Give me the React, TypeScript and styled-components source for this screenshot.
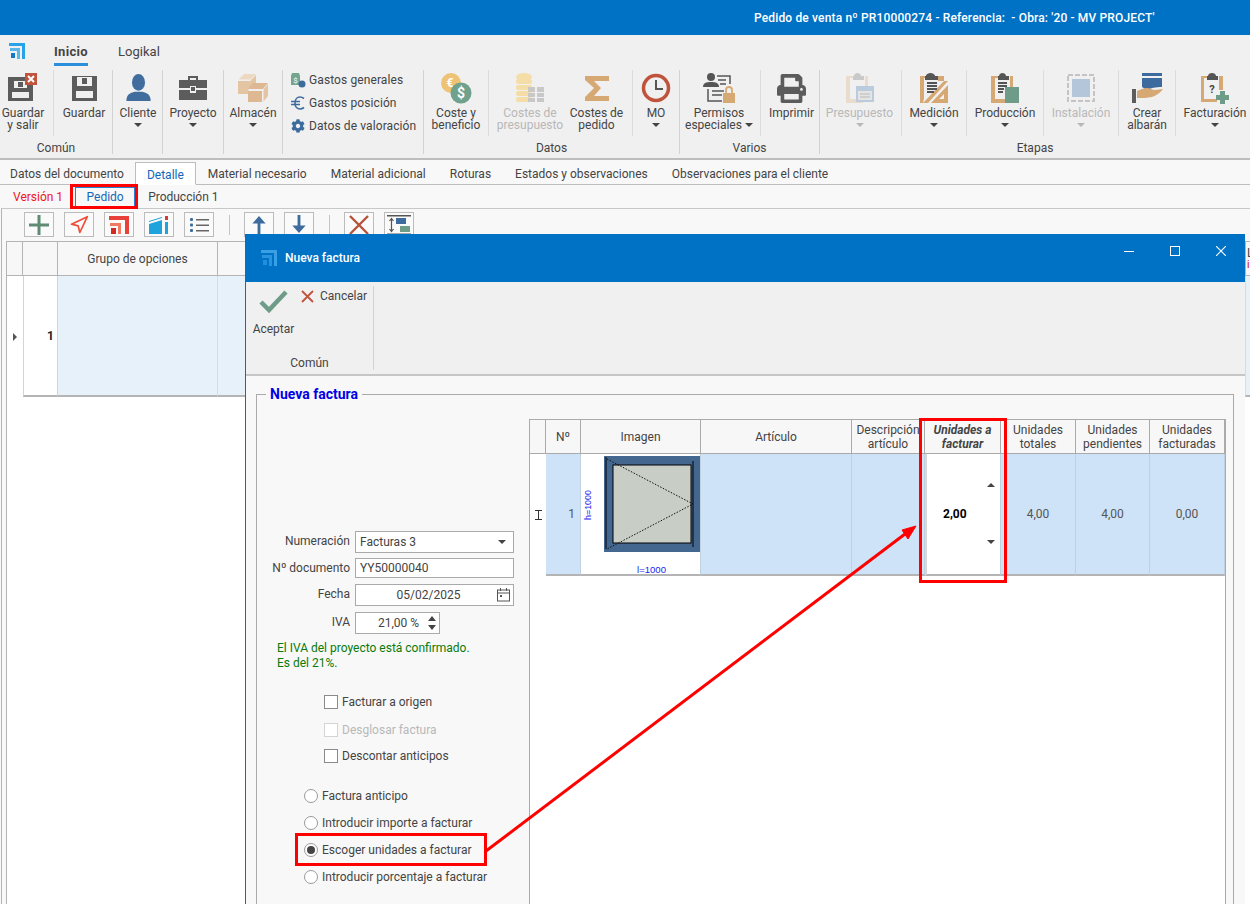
import React from "react";
import styled, { createGlobalStyle } from "styled-components";
import { Navigation } from "lucide-react";
import { FaCog, FaPrint } from "react-icons/fa";

const Global = createGlobalStyle`
  html, body { margin: 0; padding: 0; background: #f8f8f8; }
  * { box-sizing: border-box; }
  body { font-family: Roboto, "Liberation Sans", sans-serif; font-size: 12px; color: #444; }
`;

const Page = styled.div`
  position: relative; width: 1250px; height: 904px; overflow: hidden; background: #f8f8f8;
`;
const TopBar = styled.div`
  height: 35px; background: #0072c6; color: #fff; font-weight: 500; font-size: 12px; letter-spacing: .15px;
  display: flex; align-items: center; padding-left: 754px; white-space: pre;
`;
const MenuRow = styled.div`
  height: 32px; background: #f0f0f0; display: flex; align-items: flex-start; padding-left: 9px;
`;
const LogoSlot = styled.div`
  width: 45px; height: 32px; padding-top: 8px; display: flex;
`;
const MenuTab = styled.div<{ $on?: boolean }>`
  height: 31px; margin-right: 30px; line-height: 33px; font-size: 13px;
  font-weight: ${p => (p.$on ? 700 : 400)};
  letter-spacing: ${p => (p.$on ? ".3px" : ".05px")};
  border-bottom: 3px solid ${p => (p.$on ? "#2a8fdc" : "transparent")};
`;
const Ribbon = styled.div`
  height: 93px; background: #f0f0f0; display: flex; padding: 3px 0 4px; border-bottom: 2px solid #bdbdbd;
`;
const Group = styled.div<{ $w: number; $end?: boolean }>`
  width: ${p => p.$w}px; height: 84px; display: flex; flex-direction: column; flex: none;
  border-right: ${p => (p.$end ? "none" : "1px solid #d2d2d2")};
`;
const GroupItems = styled.div`
  height: 66px; display: flex;
`;
const GroupLabel = styled.div`
  height: 18px; padding-top: 5px; line-height: 14px; text-align: center;
`;
const Tool = styled.div<{ $w: number; $sep?: boolean; $pl?: number; $pr?: number; $off?: boolean }>`
  width: ${p => p.$w}px; flex: none; height: 66px; padding: 2px ${p => p.$pr || 0}px 0 ${p => p.$pl || 0}px;
  display: flex; flex-direction: column; align-items: center;
  border-right: ${p => (p.$sep ? "1px solid #dcdcdc" : "none")};
  color: ${p => (p.$off ? "#b8b8b8" : "#444")};
`;
const ToolIcon = styled.div`
  height: 32px; display: flex; align-items: center; justify-content: center;
`;
const ToolLabel = styled.div`
  margin-top: 3px; line-height: 12px; text-align: center; white-space: nowrap;
`;
const Caret = styled.span<{ $off?: boolean }>`
  display: block; width: 0; height: 0; margin: 4px auto 0;
  border-left: 4px solid transparent; border-right: 4px solid transparent;
  border-top: 4px solid ${p => (p.$off ? "#b8b8b8" : "#444")};
`;
const InlineCaret = styled(Caret)`
  display: inline-block; margin: 0 0 2px 3px;
`;
const SelectCaret = styled(Caret)`
  margin: 0 3px 0 0;
`;
const SideList = styled.div`
  display: flex; flex-direction: column; padding: 0 0 0 7px; height: 66px; gap: 3px;
`;
const SideItem = styled.div`
  height: 20px; display: flex; align-items: center; gap: 3px; white-space: nowrap; letter-spacing: .1px;
`;
const SideIcon = styled.div`
  width: 16px; display: flex; justify-content: center; align-items: center;
`;
const DocTabs = styled.div`
  height: 23px; margin-top: 2px; background: #f8f8f8; display: flex; border-bottom: 1px solid #bdbdbd;
`;
const DocTab = styled.div<{ $on?: boolean; $first?: boolean }>`
  padding: 0 ${p => (p.$on ? 11 : p.$first ? 11 : 12)}px 0 ${p => (p.$first ? 10 : p.$on ? 11 : 12)}px; line-height: 24px; height: 23px;
  color: ${p => (p.$on ? "#1467b8" : "#444")};
  background: ${p => (p.$on ? "#fff" : "transparent")};
  border: ${p => (p.$on ? "1px solid #bdbdbd" : "none")};
  border-bottom: ${p => (p.$on ? "1px solid #fff" : "none")};
`;
const SubTabs = styled.div`
  height: 23px; display: flex; align-items: center; padding: 1px 0 0 13px;
`;
const SubTab = styled.div<{ $kind?: "red" | "on" }>`
  line-height: 18px;
  color: ${p => (p.$kind === "red" ? "#f0141e" : p.$kind === "on" ? "#1467b8" : "#444")};
  ${p => p.$kind === "on" ? "width: 60px; text-align: center; margin: 0 13px 0 12px; border: 1px solid #2a7fd0; height: 20px;" : ""}
`;
const Panel = styled.div`
  margin: 0 0 0 1px; border-top: 1px solid #c8c8c8; border-left: 1px solid #b4b4b4; height: 700px;
  padding: 3px 0 0 4px;
`;
const Toolbar = styled.div`
  height: 29px; display: flex; align-items: flex-start; padding-left: 18px; gap: 10px;
`;
const IconBtn = styled.div`
  width: 30px; height: 25px; border: 1px solid #bcbcbc; background: #fafafa;
  display: flex; align-items: center; justify-content: center;
`;
const ToolSep = styled.div`
  width: 1px; height: 20px; margin: 3px 4px 0 5px; background: #c4c4c4;
`;
const BackGrid = styled.div`
  display: grid; grid-template-columns: 16px 35px 160px 1028px 20px; grid-template-rows: 34px 121px; align-content: start;
  border-left: 1px solid #b4b4b4; border-top: 1px solid #b4b4b4; width: 1260px; height: 680px; background: #fff;
`;
const BackHead = styled.div`
  background: #f7f7f7; border-right: 1px solid #b4b4b4; border-bottom: 1px solid #b4b4b4;
  display: flex; align-items: center; justify-content: center; overflow: hidden;
`;
const BackEdge = styled(BackHead)`
  flex-direction: column; align-items: flex-start; padding-left: 1px; line-height: 12px; border-right: none;
`;
const RedMark = styled.span`
  color: #c00; font-size: 10px;
`;
const BackCell = styled.div<{ $kind?: "row" | "idx" | "ind" }>`
  background: ${p => (p.$kind === "row" ? "#e6f1fa" : "#fff")};
  border-right: ${p => (p.$kind === "ind" ? "none" : p.$kind === "row" ? "1px solid #d4dde4" : "1px solid #d4d4d4")};
  border-left: ${p => (p.$kind === "idx" ? "1px solid #d4d4d4" : "none")};
  border-bottom: ${p => (p.$kind === "ind" ? "none" : "2px solid #b4b4b4")};
  display: flex; align-items: center; justify-content: ${p => (p.$kind === "idx" ? "flex-end" : "center")};
  padding-right: ${p => (p.$kind === "idx" ? "3px" : 0)}; font-weight: ${p => (p.$kind === "idx" ? 700 : 400)};
  color: #222;
`;
const RowPointer = styled.span`
  width: 0; height: 0; border-top: 4px solid transparent; border-bottom: 4px solid transparent; border-left: 4px solid #555;
`;

/* Modal window */
const Modal = styled.div`
  position: absolute; left: 245px; top: 234px; width: 1000px; height: 690px; background: #f8f8f8;
  border-left: 1px solid #0072c6; display: flex; flex-direction: column;
`;
const TitleBar = styled.div`
  height: 48px; margin-left: -1px; background: #0072c6; color: #fff; display: flex; align-items: center;
  padding: 0 19px 0 16px; flex: none; font-weight: 500;
`;
const TitleText = styled.div`
  margin-left: 8px; flex: 1; padding-bottom: 1px;
`;
const WinControls = styled.div`
  display: flex; gap: 36px; align-items: center; padding-bottom: 14px;
`;
const ModalBar = styled.div`
  height: 94px; flex: none; background: #f0f0f0; border-bottom: 2px solid #c6c6c6; padding-top: 4px; display: flex;
`;
const ModalGroup = styled.div`
  width: 128px; height: 84px; border-right: 1px solid #d2d2d2; display: flex; flex-direction: column;
`;
const ModalActions = styled.div`
  height: 68px; display: flex;
`;
const AcceptTool = styled.div`
  width: 55px; display: flex; flex-direction: column; align-items: center; padding-top: 4px; gap: 8px;
`;
const CancelTool = styled.div`
  display: flex; gap: 6px; height: 20px; align-items: center;
`;
const ModalGroupLabel = styled.div`
  text-align: center; line-height: 14px; padding-top: 5px;
`;
const ModalBody = styled.div`
  flex: 1; padding: 10px 11px 0 10px; min-height: 0;
`;
const Frame = styled.fieldset`
  margin: 0; padding: 0; height: 600px; border: 1px solid #aaa; display: flex; min-width: 0;
`;
const FrameTitle = styled.legend`
  margin-left: 9px; padding: 0 4px; font-size: 14px; line-height: 16px; font-weight: 700; color: #0000e6;
`;
const FrameRow = styled.div`
  display: flex; height: 100%; width: 100%;
`;
const FormCol = styled.div`
  width: 272px; flex: none; padding-top: 129px; display: flex; flex-direction: column;
`;
const FieldRow = styled.div<{ $mb: number }>`
  display: flex; gap: 5px; margin-bottom: ${p => p.$mb}px; align-items: flex-start;
`;
const FieldLabel = styled.div`
  width: 93px; text-align: right; padding-top: 3px; line-height: 14px; white-space: nowrap;
`;
const InputBox = styled.div<{ $w?: number; $h: number; $center?: boolean }>`
  width: ${p => p.$w || 159}px; height: ${p => p.$h}px; border: 1px solid #aaa; background: #fff;
  display: flex; align-items: center; padding: 0 4px; position: relative;
  justify-content: ${p => (p.$center ? "center" : "space-between")};
  ${p => (p.$center ? "padding-right: 16px;" : "")}
`;
const InputEnd = styled.span`
  position: absolute; right: 3px; top: 50%; transform: translateY(-50%); display: flex;
`;
const SpinValue = styled.span`
  position: absolute; right: 20px;
`;
const Notice = styled.div`
  margin: 7px 0 0 20px; color: #0a7a0a; line-height: 15px; height: 47px;
`;
const CheckList = styled.div`
  padding-left: 67px; display: flex; flex-direction: column;
`;
const CheckRow = styled.div<{ $h: number; $off?: boolean }>`
  height: ${p => p.$h}px; display: flex; align-items: center; gap: 4px; color: ${p => (p.$off ? "#b8b8b8" : "#444")};
`;
const CheckBox = styled.span<{ $off?: boolean }>`
  width: 14px; height: 14px; border: 1px solid ${p => (p.$off ? "#d4d4d4" : "#8a8a8a")}; background: #fff; flex: none;
`;
const RadioList = styled.div`
  padding-left: 47px; margin-top: 14px; display: flex; flex-direction: column;
`;
const RadioRow = styled.div`
  height: 27px; display: flex; align-items: center; gap: 4px; white-space: nowrap;
`;
const Radio = styled.span<{ $on?: boolean }>`
  width: 14px; height: 14px; border-radius: 50%; border: 1px solid #9a9a9a; background: #fff; flex: none;
  display: flex; align-items: center; justify-content: center;
  &::after { content: ""; width: 8px; height: 8px; border-radius: 50%; background: ${p => (p.$on ? "#444" : "transparent")}; }
`;
const DataGrid = styled.div`
  margin-top: 17px; width: 697px; height: 100%; background: #fff; border-left: 1px solid #aaa; border-right: 1px solid #aaa;
  display: grid; grid-template-columns: 16px 35px 120px 151px 73px 76px 75px 74px 75px; grid-template-rows: 34px 122px; align-content: start;
  border-top: 1px solid #aaa;
`;
const Head = styled.div<{ $edit?: boolean }>`
  background: #f7f7f7; border-right: 1px solid #aaa; border-bottom: 1px solid #aaa; display: flex; align-items: center; justify-content: center;
  text-align: center; line-height: 14px; overflow: hidden;
  font-weight: ${p => (p.$edit ? 700 : 400)}; font-style: ${p => (p.$edit ? "italic" : "normal")};
`;
const Cell = styled.div<{ $num?: boolean }>`
  background: #cfe3f8; border-right: 1px solid #bfd0e0; border-bottom: 2px solid #b4b4b4; display: flex; align-items: center;
  justify-content: ${p => (p.$num ? "flex-end" : "center")}; padding-right: ${p => (p.$num ? "5px" : 0)}; color: #555;
`;
const IndCell = styled(Cell)`
  background: #fff; border-right: none; border-bottom: none;
`;
const ImageCell = styled(Cell)`
  background: #fff; align-items: flex-start;
`;
const EditCell = styled(Cell)`
  background: #fff; border-left: 2px solid #d8d8d8; justify-content: flex-start; padding-left: 16px; color: #000; font-weight: 700; position: relative;
`;
const SpinUp = styled.span`
  position: absolute; right: 5px; top: 29px; width: 0; height: 0; border-left: 4px solid transparent; border-right: 4px solid transparent; border-bottom: 4px solid #444;
`;
const SpinDown = styled.span`
  position: absolute; right: 5px; top: 86px; width: 0; height: 0; border-left: 4px solid transparent; border-right: 4px solid transparent; border-top: 4px solid #444;
`;
const Callout = styled.div<{ $x: number; $y: number; $w: number; $h: number }>`
  position: absolute; left: ${p => p.$x}px; top: ${p => p.$y}px; width: ${p => p.$w}px; height: ${p => p.$h}px;
  border: 3px solid #f00; pointer-events: none;
`;
const ArrowLayer = styled.svg`
  position: absolute; left: 0; top: 0; pointer-events: none;
`;

/* ---- drawings ---- */
const Logo = ({ c = "#29a3e8", d = "#1478c8", s = 16 }: { c?: string; d?: string; s?: number }) => (
  <svg width={s} height={s} viewBox="0 0 16 16">
    <path d="M0 0h16v16h-3V3H0z" fill={c} />
    <path d="M1 5h10v11H8V8H1z" fill={c} opacity=".75" />
    <rect x="2" y="10" width="4" height="5" fill={d} />
  </svg>
);
const Floppy = () => (
  <svg width="25" height="25" viewBox="0 0 25 25">
    <path fillRule="evenodd" d="M0 0h25v25H0zM5 1v9h15V1zM4 15v7h17v-7z" fill="#5c5c5c" />
    <rect x="10" y="2" width="5" height="6" fill="#5c5c5c" />
  </svg>
);
const SaveExit = () => (
  <svg width="30" height="30" viewBox="0 0 30 30">
    <path fillRule="evenodd" d="M0 4h17v4H6v7h13v-3h6v16H0zM4 19v6h17v-6z" fill="#5c5c5c" />
    <rect x="10" y="9" width="5" height="5" fill="#5c5c5c" />
    <rect x="17" y="0" width="12" height="12" fill="#c0533c" />
    <path d="M20 3l6 6M26 3l-6 6" stroke="#fff" strokeWidth="2" />
  </svg>
);
const UserIcon = () => (
  <svg width="25" height="28" viewBox="0 0 26 30">
    <ellipse cx="13" cy="9" rx="7" ry="9" fill="#416d9e" />
    <path d="M0 29c0-7 4-9 9-10h8c5 1 9 3 9 10z" fill="#416d9e" />
  </svg>
);
const Briefcase = () => (
  <svg width="30" height="26" viewBox="0 0 30 26">
    <path d="M10 5V1h10v4h-2V3h-6v2z" fill="#5c5c5c" />
    <path d="M1 5h28v8H18v-2h-6v2H1zM1 15h11v3h6v-3h11v10H1z" fill="#5c5c5c" />
    <rect x="13" y="12" width="4" height="4" fill="#5c5c5c" />
  </svg>
);
const Boxes = () => (
  <svg width="30" height="28" viewBox="0 0 30 28">
    <path d="M0 7h12l6-6v8l-7 6v5H0z" fill="#e3c4a3" />
    <path d="M0 6l6-6h12l-6 6z" fill="#edd8c2" />
    <path d="M10 17h14v11H10zM10 15l5-6h15l-5 6z" fill="#deb893" />
    <path d="M25 16l5-6v12l-5 6z" fill="#e3c4a3" />
    <path d="M10 16h15M25 15v13" stroke="#f0f0f0" strokeWidth="1" />
    <path d="M12 6v1M0 6h12" stroke="#f0f0f0" strokeWidth="1" />
  </svg>
);
const MoneyBag = () => (
  <svg width="16" height="16" viewBox="0 0 16 16">
    <path d="M2 1h7l1 3v9H1V4z" fill="#73a58f" />
    <text x="5.5" y="11" fontSize="8" fill="#fff" textAnchor="middle" fontFamily="Roboto">$</text>
    <circle cx="12" cy="12" r="3.5" fill="#3d6b9e" />
  </svg>
);
const EuroIcon = () => (
  <svg width="16" height="16" viewBox="0 0 16 16">
    <path d="M14 3.5C12.8 2.600 11.500 2 10 2c-3 0-5 2.500-5 6s2 6 5 6c1.500 0 2.800-.6 4-1.500" fill="none" stroke="#3d6b9e" strokeWidth="1.6" />
    <path d="M1 6.500h9M1 9.500h9" stroke="#3d6b9e" strokeWidth="1.400" />
  </svg>
);
const Coins = () => (
  <svg width="32" height="32" viewBox="0 0 32 32">
    <circle cx="11" cy="11" r="10" fill="#efc375" />
    <text x="10" y="15" fontSize="12" fill="#fff" fontWeight="700" textAnchor="middle" fontFamily="Roboto">€</text>
    <circle cx="21" cy="21" r="10.500" fill="#6fa18c" />
    <text x="21" y="26" fontSize="14" fill="#fff" fontWeight="700" textAnchor="middle" fontFamily="Roboto">$</text>
  </svg>
);
const CoinStack = () => (
  <svg width="32" height="32" viewBox="0 0 32 32">
    <g fill="#f5dda8">
      <ellipse cx="10" cy="5" rx="8" ry="4" />
      <rect x="2" y="7" width="16" height="5" rx="2" />
      <rect x="2" y="13" width="16" height="5" rx="2" />
      <rect x="2" y="19" width="16" height="5" rx="2" />
      <rect x="2" y="25" width="16" height="5" rx="2" />
    </g>
    <g fill="#c8c8c8">
      <rect x="14" y="15" width="7" height="5" /><rect x="23" y="15" width="7" height="5" />
      <rect x="14" y="21" width="7" height="4" /><rect x="23" y="21" width="7" height="4" />
      <rect x="14" y="26" width="7" height="4" /><rect x="23" y="26" width="7" height="4" />
    </g>
  </svg>
);
const Sigma = () => (
  <svg width="26" height="26" viewBox="0 0 26 26">
    <path d="M1 1h24v5H10l7 7-7 8h15v5H1v-4l9-9-9-8z" fill="#d6a873" />
  </svg>
);
const Clock = () => (
  <svg width="30" height="30" viewBox="0 0 30 30">
    <circle cx="15" cy="15" r="12.500" fill="none" stroke="#c0533c" strokeWidth="3.500" />
    <path d="M15 7v9h7" fill="none" stroke="#555" strokeWidth="2" />
  </svg>
);
const Permits = () => (
  <svg width="32" height="32" viewBox="0 0 32 32">
    <circle cx="8" cy="5" r="4" fill="#555" />
    <path d="M0 15c0-4 3-5 8-5s8 1 8 5z" fill="#555" />
    <path d="M14 4h13v8M5 17v12h14" fill="none" stroke="#555" strokeWidth="1.500" />
    <path d="M15 8h8M17 12h6M9 19h12M9 23h10" stroke="#555" strokeWidth="1.500" />
    <rect x="20" y="21" width="12" height="10" fill="#d6a873" />
    <path d="M23 21v-3a3 3 0 016 0v3" fill="none" stroke="#d6a873" strokeWidth="1.800" />
  </svg>
);
const ClipFrame = ({ c, clip }: { c: string; clip: string }) => (
  <>
    <path d="M1 4h8v2H5v21h13v4H1zM20 4h3v14h-3z" fill={c} />
    <path d="M9 4c0-2 2-3 3.500-3S16 2 16 4h3v4H8V4z" fill={clip} />
  </>
);
const Quote = () => (
  <svg width="30" height="32" viewBox="0 0 30 32">
    <ClipFrame c="#eadccd" clip="#c9c9c9" />
    <rect x="11" y="14" width="18" height="16" fill="#b9cbdd" />
    <rect x="13" y="19" width="14" height="9" fill="#e4e4e4" />
    <path d="M15 22h10M15 25h10" stroke="#b8b8b8" />
  </svg>
);
const Measure = () => (
  <svg width="30" height="32" viewBox="0 0 30 32">
    <path d="M1 4h6v2H5v21l-1 4H1zM19 4h6v5h-6z" fill="#d6a873" />
    <path d="M25 9h4L9 31H4z" fill="#d6a873" />
    <path d="M7 4c0-2 3-3 4.500-3S16 2 16 4h3v4H6V4z" fill="#555" />
    <path d="M8 11h10M8 14h10M8 17h10M8 20h7" stroke="#555" strokeWidth="2" />
    <path d="M29 13v18H12zM25 22l-5 5h5z" fill="#d6a873" fillRule="evenodd" />
  </svg>
);
const Production = () => (
  <svg width="30" height="32" viewBox="0 0 30 32">
    <ClipFrame c="#d6a873" clip="#555" />
    <path d="M8 11h9M8 14h9M8 17h6M8 20h5" stroke="#555" strokeWidth="1.800" />
    <rect x="15" y="15" width="14" height="16" fill="#6f9c88" />
  </svg>
);
const Install = () => (
  <svg width="28" height="28" viewBox="0 0 28 28">
    <rect x="1" y="1" width="26" height="26" fill="none" stroke="#c4c4c4" strokeWidth="2" strokeDasharray="5 2" />
    <rect x="5" y="5" width="18" height="18" fill="#b4c7da" />
  </svg>
);
const Delivery = () => (
  <svg width="32" height="32" viewBox="0 0 32 32">
    <rect x="11" y="1" width="20" height="3" fill="#3d6b9e" />
    <path d="M11 6h20v9c-6 0-12 1-15 3l-5-3z" fill="#3d6b9e" />
    <rect x="1" y="17" width="4" height="14" fill="#5c5c5c" />
    <path d="M6 19c5-2 7-3 10-3 3 0 5 2 8 2 3 0 5-1 8-1-3 4-6 6-11 8-5 1-10 1-15 1z" fill="#d6a873" />
  </svg>
);
const Billing = () => (
  <svg width="28" height="32" viewBox="0 0 28 32">
    <path d="M0 4h6v2H3v21h13v3H0zM18 4h4v14h-4z" fill="#d6a873" />
    <path d="M7 4c0-2 2-3 4-3s4 1 4 3h2v4H6V4z" fill="#555" />
    <text x="11" y="21" fontSize="11" fontWeight="700" fill="#444" textAnchor="middle" fontFamily="Roboto">?</text>
    <path d="M19 19h5v4h4v5h-4v4h-5v-4h-4v-5h4z" fill="#6f9c88" />
  </svg>
);
const PlusGlyph = () => (
  <svg width="20" height="20" viewBox="0 0 20 20"><path d="M8.500 0h3v8.500H20v3h-8.500V20h-3v-8.500H0v-3h8.500z" fill="#5f8a74" /></svg>
);
const RedLogo = () => (
  <svg width="20" height="20" viewBox="0 0 20 20">
    <path d="M0 1h20v18h-4V5H0z" fill="#e8413a" />
    <path d="M1 8h11v11H9v-8H1z" fill="#f07a62" />
    <rect x="2" y="13" width="5" height="6" fill="#d42a24" />
  </svg>
);
const BlueBars = () => (
  <svg width="20" height="20" viewBox="0 0 20 20">
    <path d="M0 9l13-4v14H0z" fill="#1fa3dc" />
    <path d="M0 6l13-4v1L0 7z" fill="#1fa3dc" />
    <rect x="16" y="7" width="3" height="12" fill="#1fa3dc" />
    <rect x="16" y="1" width="3" height="4" fill="#d83a30" />
  </svg>
);
const ListGlyph = () => (
  <svg width="20" height="16" viewBox="0 0 20 16">
    <g fill="#3d6b9e"><rect x="1" y="1" width="3" height="3" rx="1" /><rect x="1" y="6.500" width="3" height="3" rx="1" /><rect x="1" y="12" width="3" height="3" rx="1" /></g>
    <g fill="#666"><rect x="7" y="2" width="13" height="1.500" /><rect x="7" y="7.500" width="13" height="1.500" /><rect x="7" y="13" width="13" height="1.500" /></g>
  </svg>
);
const ArrowGlyph = ({ down }: { down?: boolean }) => (
  <svg width="16" height="19" viewBox="0 0 16 20" style={down ? { transform: "rotate(180deg)" } : undefined}>
    <path d="M8 1l7 8h-5.500v11h-3V9H1z" fill="#3d6b9e" />
  </svg>
);
const CrossGlyph = () => (
  <svg width="20" height="20" viewBox="0 0 20 20"><path d="M1 1l18 18M19 1L1 19" stroke="#b5523a" strokeWidth="2.400" /></svg>
);
const RowHeightGlyph = () => (
  <svg width="24" height="20" viewBox="0 0 24 20">
    <path d="M0 .7h24M0 19.300h24" stroke="#555" strokeWidth="1.400" />
    <rect x="9" y="3" width="10" height="6" fill="#3d6b9e" />
    <rect x="13" y="11" width="10" height="6" fill="#6f9c88" />
    <path d="M4.500 4v12M2.500 6l2-2.500 2 2.500M2.500 14l2 2.500 2-2.500" fill="none" stroke="#555" strokeWidth="1.200" />
  </svg>
);
const Calendar = () => (
  <svg width="13" height="14" viewBox="0 0 13 14">
    <rect x=".5" y="2" width="12" height="11" fill="none" stroke="#555" />
    <path d="M0 5h13M3.500 0v3M9.500 0v3" stroke="#555" />
    <rect x="3" y="7" width="2" height="2" fill="#555" />
  </svg>
);
const SpinArrows = () => (
  <svg width="8" height="16" viewBox="0 0 8 16"><path d="M4 1l4 5H0zM4 15l4-5H0z" fill="#444" /></svg>
);
const CheckGlyph = () => (
  <svg width="30" height="24" viewBox="0 0 30 24"><path d="M2 12l8 8L27 2" fill="none" stroke="#6f9c88" strokeWidth="4.500" /></svg>
);
const CancelGlyph = () => (
  <svg width="13" height="13" viewBox="0 0 13 13"><path d="M1 1l11 11M12 1L1 12" stroke="#c0533c" strokeWidth="1.800" /></svg>
);
const TextCursor = () => (
  <svg width="7" height="10" viewBox="0 0 7 10"><path d="M0 .5h7M0 9.500h7M3.500 0v10" stroke="#333" strokeWidth="1" /></svg>
);
const WindowPic = () => (
  <svg width="119" height="120" viewBox="0 0 119 120">
    <rect x="23" y="2" width="96" height="96" fill="#44678f" />
    <rect x="32" y="11" width="78" height="78" fill="#c8cdc6" stroke="#000" strokeWidth="1" />
    <path d="M25 3v92M112 7v86" stroke="#000" strokeWidth="1" />
    <path d="M26 5l86 45L26 95" fill="none" stroke="#111" strokeWidth="1" strokeDasharray="1.500 1.500" />
    <text x="56" y="119" fontSize="9" fill="#2222ee" fontFamily="Liberation Sans" textLength="29" lengthAdjust="spacingAndGlyphs">l=1000</text>
    <text transform="translate(10 66) rotate(-90)" fontSize="9" fill="#2222ee" fontFamily="Liberation Sans" textLength="30" lengthAdjust="spacingAndGlyphs">h=1000</text>
  </svg>
);

export default function App() {
  return (
    <Page>
      <Global />
      <TopBar>{"Pedido de venta nº PR10000274 - Referencia:  - Obra: '20 - MV PROJECT'"}</TopBar>
      <MenuRow>
        <LogoSlot><Logo /></LogoSlot>
        <MenuTab $on>Inicio</MenuTab>
        <MenuTab>Logikal</MenuTab>
      </MenuRow>
      <Ribbon>
        <Group $w={113}>
          <GroupItems>
            <Tool $w={54} $sep $pr={7}><ToolIcon><SaveExit /></ToolIcon><ToolLabel>Guardar<br />y salir</ToolLabel></Tool>
            <Tool $w={58} $pl={2}><ToolIcon><Floppy /></ToolIcon><ToolLabel>Guardar</ToolLabel></Tool>
          </GroupItems>
          <GroupLabel>Común</GroupLabel>
        </Group>
        <Group $w={50}><GroupItems><Tool $w={49} $pl={1}><ToolIcon><UserIcon /></ToolIcon><ToolLabel>Cliente</ToolLabel><Caret /></Tool></GroupItems></Group>
        <Group $w={61}><GroupItems><Tool $w={60}><ToolIcon><Briefcase /></ToolIcon><ToolLabel>Proyecto</ToolLabel><Caret /></Tool></GroupItems></Group>
        <Group $w={59}><GroupItems><Tool $w={58}><ToolIcon><Boxes /></ToolIcon><ToolLabel>Almacén</ToolLabel><Caret /></Tool></GroupItems></Group>
        <Group $w={141}>
          <GroupItems>
            <SideList>
              <SideItem><SideIcon><MoneyBag /></SideIcon>Gastos generales</SideItem>
              <SideItem><SideIcon><EuroIcon /></SideIcon>Gastos posición</SideItem>
              <SideItem><SideIcon><FaCog size={14} color="#3d6b9e" /></SideIcon>Datos de valoración</SideItem>
            </SideList>
          </GroupItems>
        </Group>
        <Group $w={256}>
          <GroupItems>
            <Tool $w={65} $sep><ToolIcon><Coins /></ToolIcon><ToolLabel>Coste y<br />beneficio</ToolLabel></Tool>
            <Tool $w={78} $pl={4} $off><ToolIcon><CoinStack /></ToolIcon><ToolLabel>Costes de<br />presupuesto</ToolLabel></Tool>
            <Tool $w={66} $sep $pr={6}><ToolIcon><Sigma /></ToolIcon><ToolLabel>Costes de<br />pedido</ToolLabel></Tool>
            <Tool $w={46}><ToolIcon><Clock /></ToolIcon><ToolLabel>MO</ToolLabel><Caret /></Tool>
          </GroupItems>
          <GroupLabel>Datos</GroupLabel>
        </Group>
        <Group $w={140}>
          <GroupItems>
            <Tool $w={81} $sep $pr={2}><ToolIcon><Permits /></ToolIcon><ToolLabel>Permisos<br />especiales<InlineCaret /></ToolLabel></Tool>
            <Tool $w={58} $pl={3}><ToolIcon><FaPrint size={29} color="#5c5c5c" /></ToolIcon><ToolLabel>Imprimir</ToolLabel></Tool>
          </GroupItems>
          <GroupLabel>Varios</GroupLabel>
        </Group>
        <Group $w={430} $end>
          <GroupItems>
            <Tool $w={82} $sep $off $pr={2}><ToolIcon><Quote /></ToolIcon><ToolLabel>Presupuesto</ToolLabel><Caret $off /></Tool>
            <Tool $w={65} $sep><ToolIcon><Measure /></ToolIcon><ToolLabel>Medición</ToolLabel><Caret /></Tool>
            <Tool $w={77} $sep><ToolIcon><Production /></ToolIcon><ToolLabel>Producción</ToolLabel><Caret /></Tool>
            <Tool $w={75} $sep $off><ToolIcon><Install /></ToolIcon><ToolLabel>Instalación</ToolLabel><Caret $off /></Tool>
            <Tool $w={57} $sep><ToolIcon><Delivery /></ToolIcon><ToolLabel>Crear<br />albarán</ToolLabel></Tool>
            <Tool $w={74} $pl={4}><ToolIcon><Billing /></ToolIcon><ToolLabel>Facturación</ToolLabel><Caret /></Tool>
          </GroupItems>
          <GroupLabel>Etapas</GroupLabel>
        </Group>
      </Ribbon>
      <DocTabs>
        <DocTab $first>Datos del documento</DocTab>
        <DocTab $on>Detalle</DocTab>
        <DocTab>Material necesario</DocTab>
        <DocTab>Material adicional</DocTab>
        <DocTab>Roturas</DocTab>
        <DocTab>Estados y observaciones</DocTab>
        <DocTab>Observaciones para el cliente</DocTab>
      </DocTabs>
      <SubTabs>
        <SubTab $kind="red">Versión 1</SubTab>
        <SubTab $kind="on">Pedido</SubTab>
        <SubTab>Producción 1</SubTab>
      </SubTabs>
      <Panel>
        <Toolbar>
          <IconBtn><PlusGlyph /></IconBtn>
          <IconBtn><Navigation size={20} color="#ef4d37" strokeWidth={2} /></IconBtn>
          <IconBtn><RedLogo /></IconBtn>
          <IconBtn><BlueBars /></IconBtn>
          <IconBtn><ListGlyph /></IconBtn>
          <ToolSep />
          <IconBtn><ArrowGlyph /></IconBtn>
          <IconBtn><ArrowGlyph down /></IconBtn>
          <ToolSep />
          <IconBtn><CrossGlyph /></IconBtn>
          <IconBtn><RowHeightGlyph /></IconBtn>
        </Toolbar>
        <BackGrid>
          <BackHead />
          <BackHead />
          <BackHead>Grupo de opciones</BackHead>
          <BackHead />
          <BackEdge>L<RedMark>i</RedMark></BackEdge>
          <BackCell $kind="ind"><RowPointer /></BackCell>
          <BackCell $kind="idx">1</BackCell>
          <BackCell $kind="row" />
          <BackCell $kind="row" />
          <BackCell $kind="row" />
        </BackGrid>
      </Panel>

      <Modal>
        <TitleBar>
          <Logo c="#3aa0e6" d="#1f8fe0" />
          <TitleText>Nueva factura</TitleText>
          <WinControls>
            <svg width="10" height="10" viewBox="0 0 10 10"><path d="M0 5.500h10" stroke="#fff" /></svg>
            <svg width="10" height="10" viewBox="0 0 10 10"><rect x=".5" y=".5" width="9" height="9" fill="none" stroke="#fff" /></svg>
            <svg width="10" height="10" viewBox="0 0 10 10"><path d="M0 0l10 10M10 0L0 10" stroke="#fff" strokeWidth="1.100" /></svg>
          </WinControls>
        </TitleBar>
        <ModalBar>
          <ModalGroup>
            <ModalActions>
              <AcceptTool><CheckGlyph />Aceptar</AcceptTool>
              <CancelTool><CancelGlyph />Cancelar</CancelTool>
            </ModalActions>
            <ModalGroupLabel>Común</ModalGroupLabel>
          </ModalGroup>
        </ModalBar>
        <ModalBody>
          <Frame>
            <FrameTitle>Nueva factura</FrameTitle>
            <FrameRow>
              <FormCol>
                <FieldRow $mb={5}>
                  <FieldLabel>Numeración</FieldLabel>
                  <InputBox $h={22}>Facturas 3<SelectCaret /></InputBox>
                </FieldRow>
                <FieldRow $mb={6}>
                  <FieldLabel>Nº documento</FieldLabel>
                  <InputBox $h={20}>YY50000040</InputBox>
                </FieldRow>
                <FieldRow $mb={6}>
                  <FieldLabel>Fecha</FieldLabel>
                  <InputBox $h={22} $center>05/02/2025<InputEnd><Calendar /></InputEnd></InputBox>
                </FieldRow>
                <FieldRow $mb={0}>
                  <FieldLabel>IVA</FieldLabel>
                  <InputBox $h={22} $w={85}><SpinValue>21,00 %</SpinValue><InputEnd><SpinArrows /></InputEnd></InputBox>
                </FieldRow>
                <Notice>El IVA del proyecto está confirmado.<br />Es del 21%.</Notice>
                <CheckList>
                  <CheckRow $h={28}><CheckBox />Facturar a origen</CheckRow>
                  <CheckRow $h={28} $off><CheckBox $off />Desglosar factura</CheckRow>
                  <CheckRow $h={24}><CheckBox />Descontar anticipos</CheckRow>
                </CheckList>
                <RadioList>
                  <RadioRow><Radio />Factura anticipo</RadioRow>
                  <RadioRow><Radio />Introducir importe a facturar</RadioRow>
                  <RadioRow><Radio $on />Escoger unidades a facturar</RadioRow>
                  <RadioRow><Radio />Introducir porcentaje a facturar</RadioRow>
                </RadioList>
              </FormCol>
              <DataGrid>
                <Head />
                <Head>Nº</Head>
                <Head>Imagen</Head>
                <Head>Artículo</Head>
                <Head>Descripción<br />artículo</Head>
                <Head $edit>Unidades a<br />facturar</Head>
                <Head>Unidades<br />totales</Head>
                <Head>Unidades<br />pendientes</Head>
                <Head>Unidades<br />facturadas</Head>
                <IndCell><TextCursor /></IndCell>
                <Cell $num>1</Cell>
                <ImageCell><WindowPic /></ImageCell>
                <Cell />
                <Cell />
                <EditCell>2,00<SpinUp /><SpinDown /></EditCell>
                <Cell>4,00</Cell>
                <Cell>4,00</Cell>
                <Cell>0,00</Cell>
              </DataGrid>
            </FrameRow>
          </Frame>
        </ModalBody>
      </Modal>

      <Callout $x={70} $y={184} $w={68} $h={25} />
      <Callout $x={919} $y={418} $w={88} $h={165} />
      <Callout $x={295} $y={833} $w={192} $h={33} />
      <ArrowLayer width="1250" height="904" viewBox="0 0 1250 904">
        <path d="M486 851L905 534" stroke="#f00" strokeWidth="3" fill="none" />
        <path d="M916 526L902 530l6 9z" fill="#f00" stroke="#f00" strokeWidth="1" />
      </ArrowLayer>
    </Page>
  );
}
